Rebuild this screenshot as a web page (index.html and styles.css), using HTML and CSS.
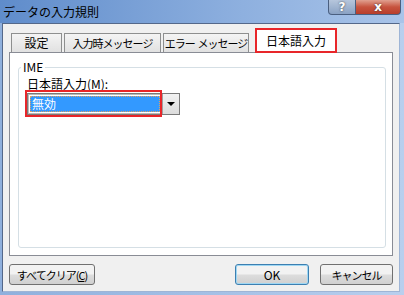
FILE: index.html
```html
<!DOCTYPE html>
<html lang="ja">
<head>
    <meta charset="UTF-8">
    <title>データの入力規則</title>
    <link rel="stylesheet" href="styles.css">
</head>
<body>

    <div class="window">
        <!-- Title bar -->
        <div class="titlebar">
            <span class="title">データの入力規則</span>
            <div class="caption-buttons">
                <span class="cap-btn help">?</span>
                <span class="cap-btn close">x</span>
            </div>
        </div>

        <div class="client">
            <!-- Tabs -->
            <div class="tabs">
                <div class="tab tab-1">設定</div>
                <div class="tab tab-2 narrow">入力時メッセージ</div>
                <div class="tab tab-3 narrow">エラー&nbsp; メッセージ</div>
                <div class="tab tab-active">日本語入力</div>
            </div>

            <div class="panel">
                <fieldset class="group">
                    <legend>IME</legend>
                    <div class="field-label">日本語入力(<u>M</u>):</div>
                    <div class="combo">
                        <div class="combo-value"><span class="selected">無効</span></div>
                        <div class="combo-arrow"></div>
                        <div class="highlight"></div>
                    </div>
                </fieldset>
            </div>

            <!-- Buttons -->
            <div class="actions">
                <button class="btn btn-clear narrow">すべてクリア(<u>C</u>)</button>
                <div class="spacer"></div>
                <button class="btn btn-ok">OK</button>
                <button class="btn btn-cancel narrow">キャンセル</button>
            </div>
        </div>
    </div>

</body>
</html>
```

FILE: styles.css
```css
* {
    box-sizing: border-box;
}

body {
    margin: 0;
    padding: 0;
    font-family: "Noto Sans CJK JP", "Liberation Sans", sans-serif;
    font-size: 12px;
    line-height: 14px;
    color: #000;
}

.narrow {
    font-size: 11px;
    letter-spacing: -1px;
}

.window {
    width: 404px;
    height: 295px;
    display: flex;
    flex-direction: column;
    background: linear-gradient(to right, #8fb0dd, #b9cfee);
}

.titlebar {
    height: 23px;
    flex-shrink: 0;
    display: flex;
    justify-content: space-between;
    background: linear-gradient(to right, #5f8ccb, #8eb0df 60%, #a9c4e9);
}

.title {
    padding-left: 3px;
    line-height: 23px;
    white-space: nowrap;
}

.caption-buttons {
    display: flex;
    margin-right: 3px;
    height: 15px;
}

.cap-btn {
    display: flex;
    justify-content: center;
    align-items: center;
    color: #fff;
    font-family: "DejaVu Sans", sans-serif;
    font-weight: bold;
    font-size: 12px;
    text-shadow: 0 0 2px #333;
    border: 1px solid #4a5f80;
    border-top: none;
}

.help {
    width: 28px;
    background: linear-gradient(to bottom, #b6c6dc, #8aa2c4);
    border-radius: 0 0 0 4px;
}

.close {
    width: 45px;
    background: linear-gradient(to bottom, #e0a090, #c7533e 50%, #b83e2c);
    border-left: none;
    border-radius: 0 0 4px 0;
}

.client {
    flex: 1;
    display: flex;
    flex-direction: column;
    margin: 0 4px 3px 2px;
    padding: 4px 6px 6px 6px;
    background: #f0f0f0;
    border: 1px solid #54688a;
    border-right-color: #9eb5d6;
    border-bottom-color: #9eb5d6;
}

.tabs {
    display: flex;
    align-items: flex-end;
    padding-left: 2px;
    height: 25px;
    flex-shrink: 0;
    margin-bottom: -1px;
    position: relative;
    z-index: 1;
}

.tab {
    height: 19px;
    line-height: 18px;
    text-align: center;
    white-space: nowrap;
    border: 1px solid #8e8f8f;
    border-bottom: none;
    background: linear-gradient(to bottom, #f4f4f4, #e1e1e1);
    margin-right: 2px;
    margin-bottom: 1px;
}

.tab-1 {
    width: 51px;
}

.tab-2 {
    width: 97px;
}

.tab-3 {
    width: 86px;
}

.tab-active {
    width: 82px;
    height: 25px;
    line-height: 21px;
    background: #fff;
    border: 2px solid #e8262a;
    margin-left: 4px;
    margin-bottom: 0;
}

.panel {
    height: 204px;
    flex-shrink: 0;
    display: flex;
    padding: 7px 6px 7px 8px;
    background: #fff;
    border: 1px solid #898c95;
}

.group {
    flex: 1;
    margin: 0;
    padding: 2px 8px 0 8px;
    border: 1px solid #d5dfe5;
    border-radius: 3px;
}

.group legend {
    padding: 0 2px;
    margin-left: -6px;
    line-height: 14px;
}

.field-label {
    line-height: 16px;
    white-space: nowrap;
}

.combo {
    position: relative;
    display: flex;
    width: 153px;
    height: 22px;
    margin-top: 1px;
    border: 1px solid #7a7a7a;
    box-shadow: inset 0 0 0 1px #b9b9b9;
}

.combo-value {
    flex: 1;
    padding: 2px;
    display: flex;
}

.selected {
    flex: 1;
    background: #3399ff;
    color: #fff;
    line-height: 16px;
    padding-left: 2px;
    outline: 1px dotted #e0a060;
    outline-offset: -1px;
}

.combo-arrow {
    width: 17px;
    background: linear-gradient(to bottom, #f2f2f2, #dcdcdc);
    border-left: 1px solid #a0a0a0;
    position: relative;
}

.combo-arrow::after {
    content: "";
    position: absolute;
    left: 4px;
    top: 8px;
    border-left: 4px solid transparent;
    border-right: 4px solid transparent;
    border-top: 4px solid #000;
}

.highlight {
    position: absolute;
    left: -3px;
    top: -4px;
    width: 137px;
    height: 27px;
    border: 2px solid #e8262a;
}

.actions {
    display: flex;
    align-items: center;
    margin-top: 8px;
}

.spacer {
    flex: 1;
}

.btn {
    height: 21px;
    padding: 0;
    font-family: "Noto Sans CJK JP", "Liberation Sans", sans-serif;
    font-size: 12px;
    color: #000;
    white-space: nowrap;
    border: 1px solid #707070;
    border-radius: 3px;
    background: linear-gradient(to bottom, #f2f2f2 45%, #dcdcdc 55%, #d0d0d0);
}

.btn.narrow {
    font-size: 11px;
}

.btn-clear {
    width: 86px;
}

.btn-ok {
    width: 74px;
    font-weight: normal;
    border-color: #3c7fb1;
    box-shadow: inset 0 0 0 1px #9fd7f3;
    margin-right: 11px;
}

.btn-cancel {
    width: 73px;
}
```
